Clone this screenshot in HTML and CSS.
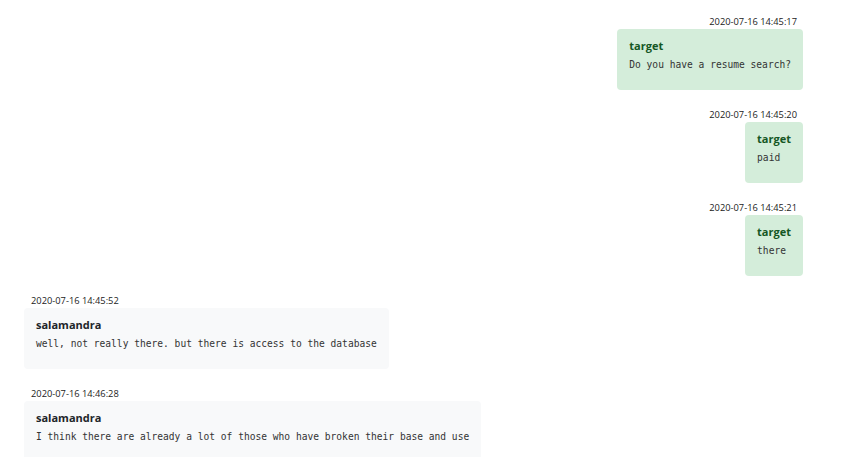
FILE: index.html
```html
<!DOCTYPE html>
<html lang="en">
  <head>
    <meta charset="UTF-8" />
    <meta name="viewport" content="width=device-width, initial-scale=1.0" />
    <title>Chat</title>
    <link rel="stylesheet" href="styles.css">
  </head>
  <body>
    <!-- Chat history -->
    <div class="chat">
      <div class="message mine">
        <div class="time">2020-07-16 14:45:17</div>
        <div class="bubble">
          <div class="author">target</div>
          <div class="text">Do you have a resume search?</div>
        </div>
      </div>

      <div class="message mine">
        <div class="time">2020-07-16 14:45:20</div>
        <div class="bubble">
          <div class="author">target</div>
          <div class="text">paid</div>
        </div>
      </div>

      <div class="message mine">
        <div class="time">2020-07-16 14:45:21</div>
        <div class="bubble">
          <div class="author">target</div>
          <div class="text">there</div>
        </div>
      </div>

      <div class="message">
        <div class="time">2020-07-16 14:45:52</div>
        <div class="bubble">
          <div class="author">salamandra</div>
          <div class="text">well, not really there. but there is access to the database</div>
        </div>
      </div>

      <div class="message">
        <div class="time">2020-07-16 14:46:28</div>
        <div class="bubble">
          <div class="author">salamandra</div>
          <div class="text">I think there are already a lot of those who have broken their base and use</div>
        </div>
      </div>
    </div>
  </body>
</html>
```

FILE: styles.css
```css
* {
  box-sizing: border-box;
}

body {
  margin: 0;
  font-family: "Open Sans", "Liberation Sans", sans-serif;
  background: #fff;
  color: #212529;
}

.chat {
  display: flex;
  flex-direction: column;
  padding: 15px 49px 0 24px;
}

.message {
  display: flex;
  flex-direction: column;
  align-items: flex-start;
  margin-bottom: 18px;
}

.message.mine {
  align-items: flex-end;
}

.time {
  font-size: 9.3px;
  line-height: 14px;
  color: #222;
  padding: 0 6px 0 7px;
}

.bubble {
  padding: 8px 12px 16px;
  border-radius: 4px;
  background-color: #f8f9fa;
}

.mine .bubble {
  background-color: #d4edda;
}

.author {
  font-size: 11px;
  font-weight: 700;
  line-height: 18px;
  color: #212529;
}

.mine .author {
  color: #155724;
}

.text {
  font-family: "DejaVu Sans Mono", "Liberation Mono", monospace;
  font-size: 9.6px;
  line-height: 19px;
  color: #333;
  white-space: pre;
}
```
